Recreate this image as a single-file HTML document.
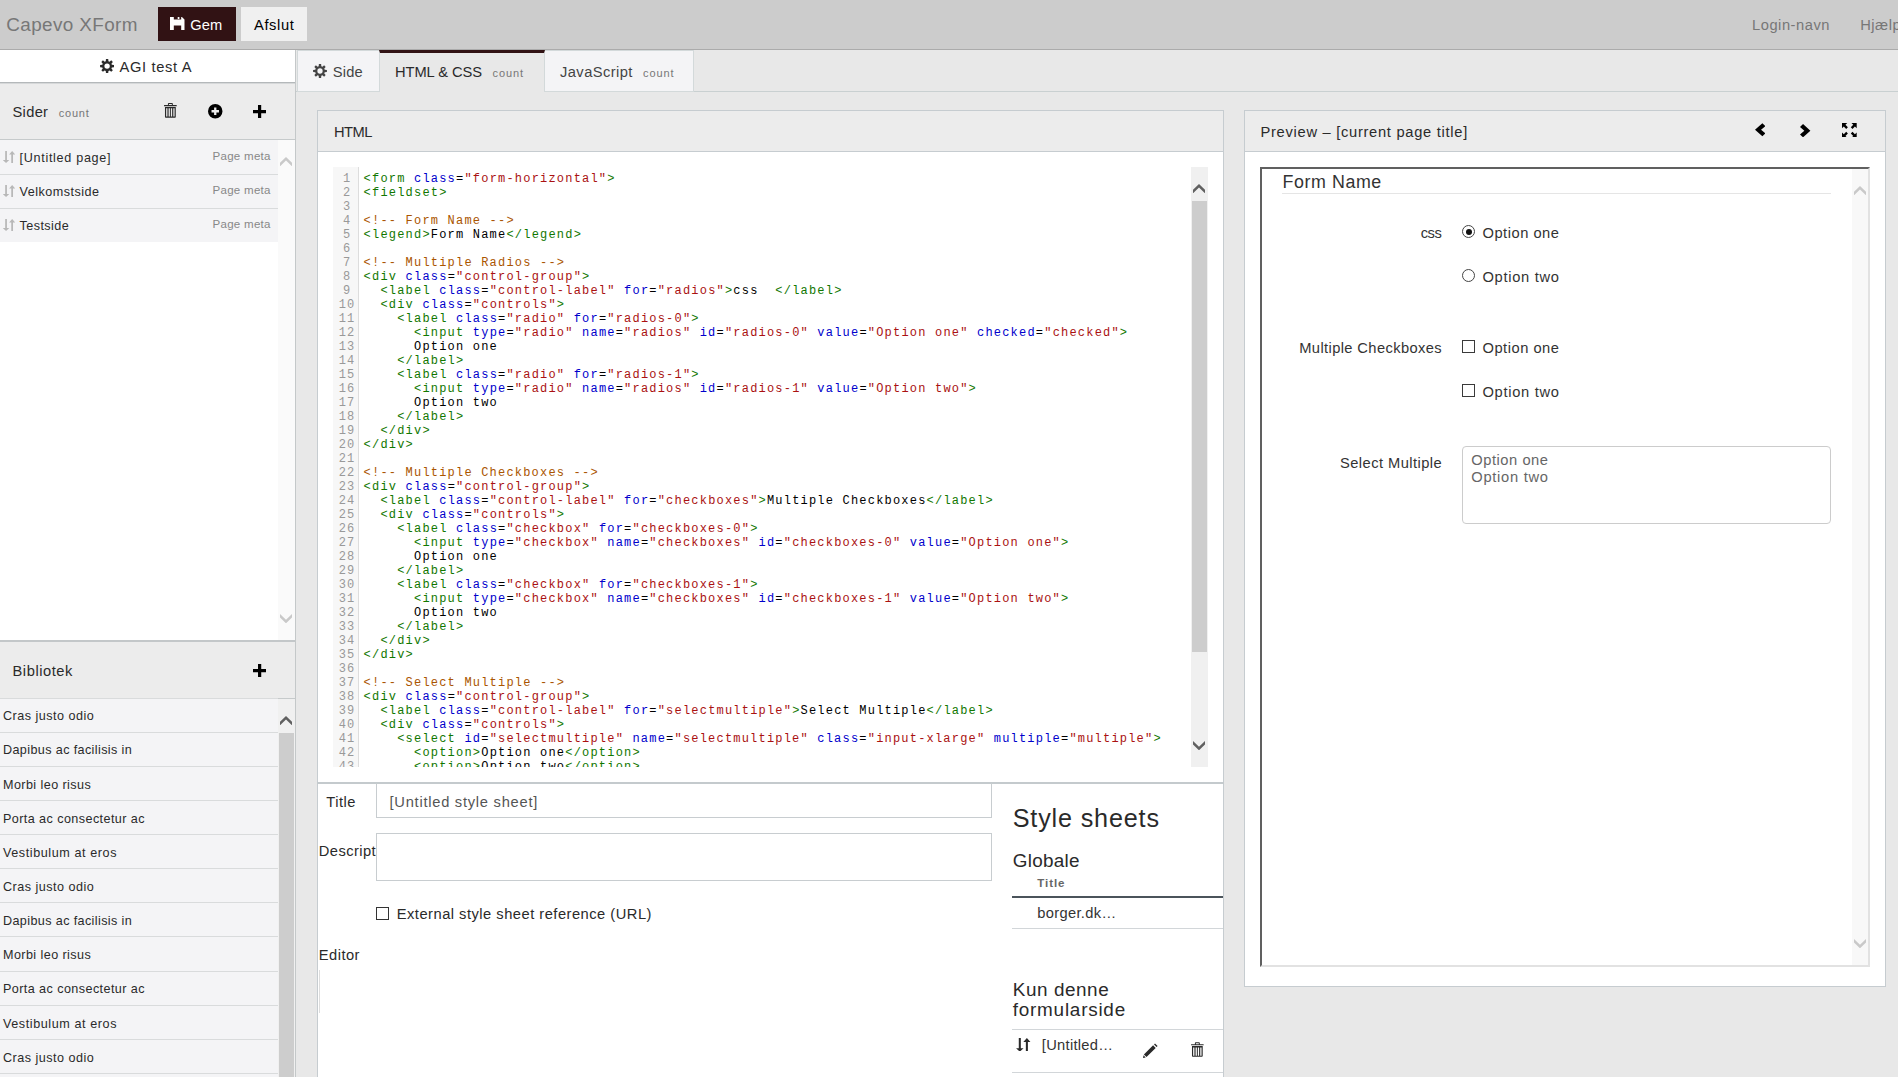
<!DOCTYPE html><html><head><meta charset="utf-8"><title>Capevo XForm</title><style>
html,body{margin:0;padding:0;overflow:hidden;background:#e8e8e8}
body{width:1898px;height:1077px}
#root{position:relative;width:1898px;height:1077px;overflow:hidden;background:#e8e8e8;font-family:"Liberation Sans",sans-serif}
.b{position:absolute;box-sizing:border-box;display:block}
.t{position:absolute;white-space:nowrap;display:block}
#code{position:absolute;left:333px;top:167px;width:858px;height:599.5px;overflow:hidden;background:#fff}
#gut{position:absolute;left:0;top:0;width:26px;height:700px;background:#f7f7f7;border-right:1px solid #ddd;box-sizing:border-box}
#code .ln,#code .cl{position:absolute;font-family:"Liberation Mono",monospace;font-size:12px;line-height:14px;height:14px;white-space:pre;letter-spacing:1.2px}
#code .ln{left:5.6px;width:17px;text-align:center;color:#999}
#code .cl{left:30.6px;color:#000}
.tg{color:#117700}.at{color:#0000cc}.st{color:#aa1111}.cm{color:#aa5500}
</style></head><body><div id="root">
<div class="b" style="left:0px;top:0px;width:1898px;height:50px;background:#cccccc;border-bottom:1px solid #ababab"></div>
<span class="t" style="left:6.25px;top:14.25px;font-size:18.9px;line-height:21px;letter-spacing:0.38px;color:#777;">Capevo XForm</span>
<div class="b" style="left:158px;top:7px;width:78px;height:34px;background:#311214"></div>
<svg class="b" style="left:170px;top:16.7px" width="14.5" height="13.6" viewBox="0 0 14.5 13.6" fill="#fff" stroke="none"><path d="M0 0 H12 L14.5 2.4 V13.6 H0 Z M3.8 0 V2.4 H11.2 V0 H9.4 V0.0 H9.4 V2.0 H7.7 V0 Z M3.8 8.6 V13.6 H11.2 V8.6 Z" fill-rule="evenodd"/></svg>
<span class="t" style="left:190.20px;top:17.00px;font-size:14.7px;line-height:16px;letter-spacing:0.17px;color:#fff;">Gem</span>
<div class="b" style="left:241px;top:7px;width:66px;height:34px;background:#f0f0f0"></div>
<span class="t" style="left:254.00px;top:17.00px;font-size:14.7px;line-height:16px;letter-spacing:0.6px;color:#000;">Afslut</span>
<span class="t" style="left:1752.00px;top:17.00px;font-size:14.7px;line-height:16px;letter-spacing:0.53px;color:#777;">Login-navn</span>
<span class="t" style="left:1860.25px;top:17.00px;font-size:14.7px;line-height:16px;letter-spacing:0.5px;color:#777;">Hjælp</span>
<div class="b" style="left:0px;top:50px;width:296px;height:1027px;background:#fff;border-right:1px solid #c4c8c9"></div>
<div class="b" style="left:0px;top:82px;width:295px;height:1px;background:#b4b8ba"></div>
<div class="b" style="left:0px;top:83px;width:295px;height:1px;background:#d6d8d9"></div>
<svg class="b" style="left:100.1px;top:58.9px" width="14.2" height="14.2" viewBox="0 0 14 14" fill="#2a2a2a" stroke="none"><path d="M5.88 0.09 L8.12 0.09 L8.31 2.28 L9.42 2.74 L11.10 1.32 L12.68 2.90 L11.26 4.58 L11.72 5.69 L13.91 5.88 L13.91 8.12 L11.72 8.31 L11.26 9.42 L12.68 11.10 L11.10 12.68 L9.42 11.26 L8.31 11.72 L8.12 13.91 L5.88 13.91 L5.69 11.72 L4.58 11.26 L2.90 12.68 L1.32 11.10 L2.74 9.42 L2.28 8.31 L0.09 8.12 L0.09 5.88 L2.28 5.69 L2.74 4.58 L1.32 2.90 L2.90 1.32 L4.58 2.74 L5.69 2.28 Z M7 4.35 A2.65 2.65 0 1 0 7 9.65 A2.65 2.65 0 1 0 7 4.35 Z" fill-rule="evenodd"/></svg>
<span class="t" style="left:119.50px;top:59.00px;font-size:14.7px;line-height:16px;letter-spacing:0.65px;color:#2a2a2a;">AGI test A</span>
<div class="b" style="left:0px;top:84px;width:295px;height:56px;background:#ececec;border-bottom:1px solid #c6cacb"></div>
<span class="t" style="left:12.50px;top:104.00px;font-size:14.7px;line-height:16px;letter-spacing:0.3px;color:#2a2a2a;">Sider</span>
<span class="t" style="left:58.75px;top:107.00px;font-size:11.03px;line-height:12px;letter-spacing:0.75px;color:#777;">count</span>
<svg class="b" style="left:164.25px;top:103.25px" width="12.75" height="14.75" viewBox="0 0 13 15" fill="#2a2a2a" stroke="none"><path d="M4 2 V0.8 Q4 0 4.8 0 H8.2 Q9 0 9 0.8 V2 H12.6 Q13 2 13 2.4 V3.2 H0 V2.4 Q0 2 0.4 2 Z M5 2 H8 V1 H5 Z M1 4 H12 V14.2 Q12 15 11.2 15 H1.8 Q1 15 1 14.2 Z M2.2 5.4 V13.8 H3.5 V5.4 Z M4.7 5.4 V13.8 H6 V5.4 Z M7 5.4 V13.8 H8.3 V5.4 Z M9.5 5.4 V13.8 H10.8 V5.4 Z" fill-rule="evenodd"/></svg>
<svg class="b" style="left:208px;top:104.25px" width="14.5" height="14.5" viewBox="0 0 14 14" fill="#000" stroke="none"><path d="M7 0 A7 7 0 1 0 7 14 A7 7 0 1 0 7 0 Z M5.9 3.4 H8.1 V5.9 H10.6 V8.1 H8.1 V10.6 H5.9 V8.1 H3.4 V5.9 H5.9 Z" fill-rule="evenodd"/></svg>
<svg class="b" style="left:252.7px;top:105.1px" width="13.2" height="13.2" viewBox="0 0 14 14" fill="#000" stroke="none"><path d="M5.3 0 H8.7 V5.3 H14 V8.7 H8.7 V14 H5.3 V8.7 H0 V5.3 H5.3 Z"/></svg>
<div class="b" style="left:0px;top:140px;width:278px;height:35px;background:#f4f4f6;border-bottom:1px solid #d9dbdc"></div>
<svg class="b" style="left:2.7px;top:151px" width="12.2" height="12" viewBox="0 0 12.4 12" fill="#b8b8b8" stroke="none"><path d="M2.2 0 H4 V9 H6.4 L3.1 12 L-0.2 9 H2.2 Z"/><path d="M8.4 12 H10.2 V3.4 H12.4 L9.3 0 L6.2 3.4 H8.4 Z"/></svg>
<span class="t" style="left:19.50px;top:150.75px;font-size:12.6px;line-height:14px;letter-spacing:0.7px;color:#2a2a2a;">[Untitled page]</span>
<span class="t" style="left:212.50px;top:150.00px;font-size:11.55px;line-height:12px;letter-spacing:0.27px;color:#888;">Page meta</span>
<div class="b" style="left:0px;top:175px;width:278px;height:34px;background:#f4f4f6;border-bottom:1px solid #d9dbdc"></div>
<svg class="b" style="left:2.7px;top:185px" width="12.2" height="12" viewBox="0 0 12.4 12" fill="#b8b8b8" stroke="none"><path d="M2.2 0 H4 V9 H6.4 L3.1 12 L-0.2 9 H2.2 Z"/><path d="M8.4 12 H10.2 V3.4 H12.4 L9.3 0 L6.2 3.4 H8.4 Z"/></svg>
<span class="t" style="left:19.50px;top:184.75px;font-size:12.6px;line-height:14px;letter-spacing:0.48px;color:#2a2a2a;">Velkomstside</span>
<span class="t" style="left:212.50px;top:184.00px;font-size:11.55px;line-height:12px;letter-spacing:0.27px;color:#888;">Page meta</span>
<div class="b" style="left:0px;top:209px;width:278px;height:33px;background:#f4f4f6"></div>
<svg class="b" style="left:2.7px;top:219px" width="12.2" height="12" viewBox="0 0 12.4 12" fill="#b8b8b8" stroke="none"><path d="M2.2 0 H4 V9 H6.4 L3.1 12 L-0.2 9 H2.2 Z"/><path d="M8.4 12 H10.2 V3.4 H12.4 L9.3 0 L6.2 3.4 H8.4 Z"/></svg>
<span class="t" style="left:19.50px;top:218.75px;font-size:12.6px;line-height:14px;letter-spacing:0.43px;color:#2a2a2a;">Testside</span>
<span class="t" style="left:212.50px;top:218.00px;font-size:11.55px;line-height:12px;letter-spacing:0.27px;color:#888;">Page meta</span>
<div class="b" style="left:278px;top:140px;width:17px;height:500px;background:#fafafa"></div>
<svg class="b" style="left:280.2px;top:156.7px" width="12" height="9.3" viewBox="0 0 12 9.3" fill="#c9c9c9"><path d="M0 5.8 L6 0 L12 5.8 V9.3 L6 3.6 L0 9.3 Z"/></svg>
<svg class="b" style="left:280.2px;top:614px" width="12" height="9.3" viewBox="0 0 12 9.3" fill="#c9c9c9"><path d="M0 3.5 L6 9.3 L12 3.5 V0 L6 5.7 L0 0 Z"/></svg>
<div class="b" style="left:0px;top:640px;width:295px;height:2px;background:#c3c7c9"></div>
<div class="b" style="left:0px;top:642px;width:295px;height:56px;background:#ececec"></div>
<div class="b" style="left:0px;top:698px;width:295px;height:1px;background:#c6cacb"></div>
<span class="t" style="left:12.50px;top:663.25px;font-size:14.7px;line-height:16px;letter-spacing:0.55px;color:#2a2a2a;">Bibliotek</span>
<svg class="b" style="left:253px;top:663.5px" width="13.25" height="13.25" viewBox="0 0 14 14" fill="#000" stroke="none"><path d="M5.3 0 H8.7 V5.3 H14 V8.7 H8.7 V14 H5.3 V8.7 H0 V5.3 H5.3 Z"/></svg>
<div class="b" style="left:0px;top:698px;width:278px;height:34px;background:#f4f4f6;border-top:1px solid #d9dbdc"></div>
<span class="t" style="left:3.00px;top:709.00px;font-size:12.6px;line-height:14px;letter-spacing:0.48px;color:#2a2a2a;">Cras justo odio</span>
<div class="b" style="left:0px;top:732px;width:278px;height:34px;background:#f4f4f6;border-top:1px solid #d9dbdc"></div>
<span class="t" style="left:3.00px;top:743.00px;font-size:12.6px;line-height:14px;letter-spacing:0.38px;color:#2a2a2a;">Dapibus ac facilisis in</span>
<div class="b" style="left:0px;top:766px;width:278px;height:34px;background:#f4f4f6;border-top:1px solid #d9dbdc"></div>
<span class="t" style="left:3.00px;top:778.00px;font-size:12.6px;line-height:14px;letter-spacing:0.42px;color:#2a2a2a;">Morbi leo risus</span>
<div class="b" style="left:0px;top:800px;width:278px;height:34px;background:#f4f4f6;border-top:1px solid #d9dbdc"></div>
<span class="t" style="left:3.00px;top:812.00px;font-size:12.6px;line-height:14px;letter-spacing:0.42px;color:#2a2a2a;">Porta ac consectetur ac</span>
<div class="b" style="left:0px;top:834px;width:278px;height:34px;background:#f4f4f6;border-top:1px solid #d9dbdc"></div>
<span class="t" style="left:3.00px;top:846.00px;font-size:12.6px;line-height:14px;letter-spacing:0.58px;color:#2a2a2a;">Vestibulum at eros</span>
<div class="b" style="left:0px;top:868px;width:278px;height:34px;background:#f4f4f6;border-top:1px solid #d9dbdc"></div>
<span class="t" style="left:3.00px;top:880.00px;font-size:12.6px;line-height:14px;letter-spacing:0.48px;color:#2a2a2a;">Cras justo odio</span>
<div class="b" style="left:0px;top:902px;width:278px;height:34px;background:#f4f4f6;border-top:1px solid #d9dbdc"></div>
<span class="t" style="left:3.00px;top:914.00px;font-size:12.6px;line-height:14px;letter-spacing:0.38px;color:#2a2a2a;">Dapibus ac facilisis in</span>
<div class="b" style="left:0px;top:936px;width:278px;height:35px;background:#f4f4f6;border-top:1px solid #d9dbdc"></div>
<span class="t" style="left:3.00px;top:948.00px;font-size:12.6px;line-height:14px;letter-spacing:0.42px;color:#2a2a2a;">Morbi leo risus</span>
<div class="b" style="left:0px;top:971px;width:278px;height:34px;background:#f4f4f6;border-top:1px solid #d9dbdc"></div>
<span class="t" style="left:3.00px;top:982.00px;font-size:12.6px;line-height:14px;letter-spacing:0.42px;color:#2a2a2a;">Porta ac consectetur ac</span>
<div class="b" style="left:0px;top:1005px;width:278px;height:34px;background:#f4f4f6;border-top:1px solid #d9dbdc"></div>
<span class="t" style="left:3.00px;top:1017.00px;font-size:12.6px;line-height:14px;letter-spacing:0.58px;color:#2a2a2a;">Vestibulum at eros</span>
<div class="b" style="left:0px;top:1039px;width:278px;height:34px;background:#f4f4f6;border-top:1px solid #d9dbdc"></div>
<span class="t" style="left:3.00px;top:1051.00px;font-size:12.6px;line-height:14px;letter-spacing:0.48px;color:#2a2a2a;">Cras justo odio</span>
<div class="b" style="left:0px;top:1073px;width:278px;height:34px;background:#f4f4f6;border-top:1px solid #d9dbdc"></div>
<span class="t" style="left:3.00px;top:1085.00px;font-size:12.6px;line-height:14px;letter-spacing:0.38px;color:#2a2a2a;">Dapibus ac facilisis in</span>
<div class="b" style="left:278px;top:699px;width:17px;height:400px;background:#f0f0f0"></div>
<svg class="b" style="left:280.2px;top:716px" width="12" height="9.3" viewBox="0 0 12 9.3" fill="#606060"><path d="M0 5.8 L6 0 L12 5.8 V9.3 L6 3.6 L0 9.3 Z"/></svg>
<div class="b" style="left:279px;top:733px;width:15px;height:400px;background:#cdcdcd"></div>
<div class="b" style="left:296px;top:91px;width:1602px;height:1px;background:#c9d0d1"></div>
<div class="b" style="left:297px;top:50px;width:83px;height:42px;background:#f4f4f6;border:1px solid #d3d9da"></div>
<svg class="b" style="left:313px;top:64px" width="14" height="14" viewBox="0 0 14 14" fill="#444" stroke="none"><path d="M5.88 0.09 L8.12 0.09 L8.31 2.28 L9.42 2.74 L11.10 1.32 L12.68 2.90 L11.26 4.58 L11.72 5.69 L13.91 5.88 L13.91 8.12 L11.72 8.31 L11.26 9.42 L12.68 11.10 L11.10 12.68 L9.42 11.26 L8.31 11.72 L8.12 13.91 L5.88 13.91 L5.69 11.72 L4.58 11.26 L2.90 12.68 L1.32 11.10 L2.74 9.42 L2.28 8.31 L0.09 8.12 L0.09 5.88 L2.28 5.69 L2.74 4.58 L1.32 2.90 L2.90 1.32 L4.58 2.74 L5.69 2.28 Z M7 4.35 A2.65 2.65 0 1 0 7 9.65 A2.65 2.65 0 1 0 7 4.35 Z" fill-rule="evenodd"/></svg>
<span class="t" style="left:332.75px;top:64.00px;font-size:14.7px;line-height:16px;letter-spacing:0.19px;color:#444;">Side</span>
<div class="b" style="left:379px;top:50px;width:166px;height:42px;background:#e8e8e8;border-top:3px solid #311214;border-left:1px solid #d3d9da;border-right:1px solid #d3d9da"></div>
<span class="t" style="left:395.00px;top:64.00px;font-size:14.7px;line-height:16px;letter-spacing:-0.07px;color:#2a2a2a;">HTML &amp; CSS</span>
<span class="t" style="left:492.50px;top:67.00px;font-size:11.03px;line-height:12px;letter-spacing:0.88px;color:#777;">count</span>
<div class="b" style="left:545px;top:50px;width:149px;height:42px;background:#f4f4f6;border:1px solid #d3d9da;border-left:none"></div>
<span class="t" style="left:560.00px;top:64.00px;font-size:14.7px;line-height:16px;letter-spacing:0.43px;color:#444;">JavaScript</span>
<span class="t" style="left:643.00px;top:67.00px;font-size:11.03px;line-height:12px;letter-spacing:0.88px;color:#777;">count</span>
<div class="b" style="left:317px;top:110px;width:907px;height:673px;background:#fff;border:1px solid #c6ccd0"></div>
<div class="b" style="left:318px;top:111px;width:905px;height:41px;background:#ececec;border-bottom:1px solid #c6ccd0"></div>
<span class="t" style="left:334.00px;top:124.00px;font-size:14.7px;line-height:16px;letter-spacing:-0.51px;color:#2a2a2a;">HTML</span>
<div id="code"><div id="gut"></div>
<div class="ln" style="top:5px">1</div>
<div class="cl" style="top:5px"><span class="tg">&lt;form</span> <span class="at">class</span>=<span class="st">&quot;form-horizontal&quot;</span><span class="tg">&gt;</span></div>
<div class="ln" style="top:19px">2</div>
<div class="cl" style="top:19px"><span class="tg">&lt;fieldset&gt;</span></div>
<div class="ln" style="top:33px">3</div>
<div class="ln" style="top:47px">4</div>
<div class="cl" style="top:47px"><span class="cm">&lt;!-- Form Name --&gt;</span></div>
<div class="ln" style="top:61px">5</div>
<div class="cl" style="top:61px"><span class="tg">&lt;legend&gt;</span>Form Name<span class="tg">&lt;/legend&gt;</span></div>
<div class="ln" style="top:75px">6</div>
<div class="ln" style="top:89px">7</div>
<div class="cl" style="top:89px"><span class="cm">&lt;!-- Multiple Radios --&gt;</span></div>
<div class="ln" style="top:103px">8</div>
<div class="cl" style="top:103px"><span class="tg">&lt;div</span> <span class="at">class</span>=<span class="st">&quot;control-group&quot;</span><span class="tg">&gt;</span></div>
<div class="ln" style="top:117px">9</div>
<div class="cl" style="top:117px">  <span class="tg">&lt;label</span> <span class="at">class</span>=<span class="st">&quot;control-label&quot;</span> <span class="at">for</span>=<span class="st">&quot;radios&quot;</span><span class="tg">&gt;</span>css  <span class="tg">&lt;/label&gt;</span></div>
<div class="ln" style="top:131px">10</div>
<div class="cl" style="top:131px">  <span class="tg">&lt;div</span> <span class="at">class</span>=<span class="st">&quot;controls&quot;</span><span class="tg">&gt;</span></div>
<div class="ln" style="top:145px">11</div>
<div class="cl" style="top:145px">    <span class="tg">&lt;label</span> <span class="at">class</span>=<span class="st">&quot;radio&quot;</span> <span class="at">for</span>=<span class="st">&quot;radios-0&quot;</span><span class="tg">&gt;</span></div>
<div class="ln" style="top:159px">12</div>
<div class="cl" style="top:159px">      <span class="tg">&lt;input</span> <span class="at">type</span>=<span class="st">&quot;radio&quot;</span> <span class="at">name</span>=<span class="st">&quot;radios&quot;</span> <span class="at">id</span>=<span class="st">&quot;radios-0&quot;</span> <span class="at">value</span>=<span class="st">&quot;Option one&quot;</span> <span class="at">checked</span>=<span class="st">&quot;checked&quot;</span><span class="tg">&gt;</span></div>
<div class="ln" style="top:173px">13</div>
<div class="cl" style="top:173px">      Option one</div>
<div class="ln" style="top:187px">14</div>
<div class="cl" style="top:187px">    <span class="tg">&lt;/label&gt;</span></div>
<div class="ln" style="top:201px">15</div>
<div class="cl" style="top:201px">    <span class="tg">&lt;label</span> <span class="at">class</span>=<span class="st">&quot;radio&quot;</span> <span class="at">for</span>=<span class="st">&quot;radios-1&quot;</span><span class="tg">&gt;</span></div>
<div class="ln" style="top:215px">16</div>
<div class="cl" style="top:215px">      <span class="tg">&lt;input</span> <span class="at">type</span>=<span class="st">&quot;radio&quot;</span> <span class="at">name</span>=<span class="st">&quot;radios&quot;</span> <span class="at">id</span>=<span class="st">&quot;radios-1&quot;</span> <span class="at">value</span>=<span class="st">&quot;Option two&quot;</span><span class="tg">&gt;</span></div>
<div class="ln" style="top:229px">17</div>
<div class="cl" style="top:229px">      Option two</div>
<div class="ln" style="top:243px">18</div>
<div class="cl" style="top:243px">    <span class="tg">&lt;/label&gt;</span></div>
<div class="ln" style="top:257px">19</div>
<div class="cl" style="top:257px">  <span class="tg">&lt;/div&gt;</span></div>
<div class="ln" style="top:271px">20</div>
<div class="cl" style="top:271px"><span class="tg">&lt;/div&gt;</span></div>
<div class="ln" style="top:285px">21</div>
<div class="ln" style="top:299px">22</div>
<div class="cl" style="top:299px"><span class="cm">&lt;!-- Multiple Checkboxes --&gt;</span></div>
<div class="ln" style="top:313px">23</div>
<div class="cl" style="top:313px"><span class="tg">&lt;div</span> <span class="at">class</span>=<span class="st">&quot;control-group&quot;</span><span class="tg">&gt;</span></div>
<div class="ln" style="top:327px">24</div>
<div class="cl" style="top:327px">  <span class="tg">&lt;label</span> <span class="at">class</span>=<span class="st">&quot;control-label&quot;</span> <span class="at">for</span>=<span class="st">&quot;checkboxes&quot;</span><span class="tg">&gt;</span>Multiple Checkboxes<span class="tg">&lt;/label&gt;</span></div>
<div class="ln" style="top:341px">25</div>
<div class="cl" style="top:341px">  <span class="tg">&lt;div</span> <span class="at">class</span>=<span class="st">&quot;controls&quot;</span><span class="tg">&gt;</span></div>
<div class="ln" style="top:355px">26</div>
<div class="cl" style="top:355px">    <span class="tg">&lt;label</span> <span class="at">class</span>=<span class="st">&quot;checkbox&quot;</span> <span class="at">for</span>=<span class="st">&quot;checkboxes-0&quot;</span><span class="tg">&gt;</span></div>
<div class="ln" style="top:369px">27</div>
<div class="cl" style="top:369px">      <span class="tg">&lt;input</span> <span class="at">type</span>=<span class="st">&quot;checkbox&quot;</span> <span class="at">name</span>=<span class="st">&quot;checkboxes&quot;</span> <span class="at">id</span>=<span class="st">&quot;checkboxes-0&quot;</span> <span class="at">value</span>=<span class="st">&quot;Option one&quot;</span><span class="tg">&gt;</span></div>
<div class="ln" style="top:383px">28</div>
<div class="cl" style="top:383px">      Option one</div>
<div class="ln" style="top:397px">29</div>
<div class="cl" style="top:397px">    <span class="tg">&lt;/label&gt;</span></div>
<div class="ln" style="top:411px">30</div>
<div class="cl" style="top:411px">    <span class="tg">&lt;label</span> <span class="at">class</span>=<span class="st">&quot;checkbox&quot;</span> <span class="at">for</span>=<span class="st">&quot;checkboxes-1&quot;</span><span class="tg">&gt;</span></div>
<div class="ln" style="top:425px">31</div>
<div class="cl" style="top:425px">      <span class="tg">&lt;input</span> <span class="at">type</span>=<span class="st">&quot;checkbox&quot;</span> <span class="at">name</span>=<span class="st">&quot;checkboxes&quot;</span> <span class="at">id</span>=<span class="st">&quot;checkboxes-1&quot;</span> <span class="at">value</span>=<span class="st">&quot;Option two&quot;</span><span class="tg">&gt;</span></div>
<div class="ln" style="top:439px">32</div>
<div class="cl" style="top:439px">      Option two</div>
<div class="ln" style="top:453px">33</div>
<div class="cl" style="top:453px">    <span class="tg">&lt;/label&gt;</span></div>
<div class="ln" style="top:467px">34</div>
<div class="cl" style="top:467px">  <span class="tg">&lt;/div&gt;</span></div>
<div class="ln" style="top:481px">35</div>
<div class="cl" style="top:481px"><span class="tg">&lt;/div&gt;</span></div>
<div class="ln" style="top:495px">36</div>
<div class="ln" style="top:509px">37</div>
<div class="cl" style="top:509px"><span class="cm">&lt;!-- Select Multiple --&gt;</span></div>
<div class="ln" style="top:523px">38</div>
<div class="cl" style="top:523px"><span class="tg">&lt;div</span> <span class="at">class</span>=<span class="st">&quot;control-group&quot;</span><span class="tg">&gt;</span></div>
<div class="ln" style="top:537px">39</div>
<div class="cl" style="top:537px">  <span class="tg">&lt;label</span> <span class="at">class</span>=<span class="st">&quot;control-label&quot;</span> <span class="at">for</span>=<span class="st">&quot;selectmultiple&quot;</span><span class="tg">&gt;</span>Select Multiple<span class="tg">&lt;/label&gt;</span></div>
<div class="ln" style="top:551px">40</div>
<div class="cl" style="top:551px">  <span class="tg">&lt;div</span> <span class="at">class</span>=<span class="st">&quot;controls&quot;</span><span class="tg">&gt;</span></div>
<div class="ln" style="top:565px">41</div>
<div class="cl" style="top:565px">    <span class="tg">&lt;select</span> <span class="at">id</span>=<span class="st">&quot;selectmultiple&quot;</span> <span class="at">name</span>=<span class="st">&quot;selectmultiple&quot;</span> <span class="at">class</span>=<span class="st">&quot;input-xlarge&quot;</span> <span class="at">multiple</span>=<span class="st">&quot;multiple&quot;</span><span class="tg">&gt;</span></div>
<div class="ln" style="top:579px">42</div>
<div class="cl" style="top:579px">      <span class="tg">&lt;option&gt;</span>Option one<span class="tg">&lt;/option&gt;</span></div>
<div class="ln" style="top:593px">43</div>
<div class="cl" style="top:593px">      <span class="tg">&lt;option&gt;</span>Option two<span class="tg">&lt;/option&gt;</span></div>
<div class="ln" style="top:607px">44</div>
<div class="cl" style="top:607px">    <span class="tg">&lt;/select&gt;</span></div>
</div>
<div class="b" style="left:1191.25px;top:167px;width:16.75px;height:599.5px;background:#f0f0f0"></div>
<svg class="b" style="left:1193.2px;top:183.7px" width="12" height="9.3" viewBox="0 0 12 9.3" fill="#606060"><path d="M0 5.8 L6 0 L12 5.8 V9.3 L6 3.6 L0 9.3 Z"/></svg>
<div class="b" style="left:1192px;top:201px;width:15px;height:450.5px;background:#cdcdcd"></div>
<svg class="b" style="left:1193.2px;top:740.5px" width="12" height="9.3" viewBox="0 0 12 9.3" fill="#606060"><path d="M0 3.5 L6 9.3 L12 3.5 V0 L6 5.7 L0 0 Z"/></svg>
<div class="b" style="left:317px;top:782px;width:907px;height:2px;background:#c4cacd"></div>
<div class="b" style="left:317px;top:784px;width:907px;height:300px;background:#fff;border-left:1px solid #c6ccd0;border-right:1px solid #c6ccd0"></div>
<span class="t" style="left:326.25px;top:794.00px;font-size:14.7px;line-height:16px;letter-spacing:0.51px;color:#2a2a2a;">Title</span>
<div class="b" style="left:376px;top:783px;width:616px;height:35px;background:#fff;border:1px solid #c8cdd0;border-top-color:#c4cacd"></div>
<span class="t" style="left:389.50px;top:794.00px;font-size:14.7px;line-height:16px;letter-spacing:0.74px;color:#555;">[Untitled style sheet]</span>
<span class="t" style="left:318.75px;top:843.25px;font-size:14.7px;line-height:16px;letter-spacing:0.44px;color:#2a2a2a;">Descript</span>
<div class="b" style="left:376px;top:833px;width:616px;height:48px;background:#fff;border:1px solid #c8cdd0"></div>
<div class="b" style="left:376.25px;top:907.25px;width:13px;height:13px;background:#fff;border:1px solid #333"></div>
<span class="t" style="left:396.75px;top:906.25px;font-size:14.7px;line-height:16px;letter-spacing:0.49px;color:#2a2a2a;">External style sheet reference (URL)</span>
<span class="t" style="left:318.75px;top:947.00px;font-size:14.7px;line-height:16px;letter-spacing:0.47px;color:#2a2a2a;">Editor</span>
<div class="b" style="left:319px;top:969.5px;width:1px;height:43.5px;background:#ddd"></div>
<span class="t" style="left:1012.75px;top:804.00px;font-size:25.2px;line-height:28px;letter-spacing:0.82px;color:#2a2a2a;">Style sheets</span>
<span class="t" style="left:1012.75px;top:850.00px;font-size:18.9px;line-height:21px;letter-spacing:0.27px;color:#2a2a2a;">Globale</span>
<span class="t" style="left:1037.25px;top:877.00px;font-size:11.55px;line-height:12px;letter-spacing:0.93px;color:#666;font-weight:bold;">Title</span>
<div class="b" style="left:1012px;top:896px;width:211px;height:2px;background:#4b545b"></div>
<span class="t" style="left:1037.25px;top:905.25px;font-size:14.7px;line-height:16px;letter-spacing:0.33px;color:#333;">borger.dk…</span>
<div class="b" style="left:1012px;top:928px;width:211px;height:1px;background:#d2d6d9"></div>
<span class="t" style="left:1012.75px;top:978.75px;font-size:18.9px;line-height:21px;letter-spacing:0.57px;color:#2a2a2a;">Kun denne</span>
<span class="t" style="left:1012.75px;top:998.75px;font-size:18.9px;line-height:21px;letter-spacing:0.77px;color:#2a2a2a;">formularside</span>
<div class="b" style="left:1012px;top:1029px;width:211px;height:1px;background:#d2d6d9"></div>
<svg class="b" style="left:1016.4px;top:1037.5px" width="14.7" height="13.7" viewBox="0 0 12.4 12" fill="#2a2a2a" stroke="none"><path d="M2.2 0 H4 V9 H6.4 L3.1 12 L-0.2 9 H2.2 Z"/><path d="M8.4 12 H10.2 V3.4 H12.4 L9.3 0 L6.2 3.4 H8.4 Z"/></svg>
<span class="t" style="left:1041.80px;top:1036.90px;font-size:14.7px;line-height:16px;letter-spacing:0.29px;color:#333;">[Untitled…</span>
<svg class="b" style="left:1143.2px;top:1042.5px" width="15" height="15" viewBox="0 0 15 15" fill="#2a2a2a" stroke="none"><path d="M10.1 2.3 L12.7 4.9 L3.5 14.1 L0.9 11.5 Z M0.5 12.3 L2.7 14.5 L0 15 Z M11.0 1.4 L12.0 0.4 L14.6 3.0 L13.6 4.0 Z"/></svg>
<svg class="b" style="left:1191px;top:1042px" width="12.7" height="15" viewBox="0 0 13 15" fill="#2a2a2a" stroke="none"><path d="M4 2 V0.8 Q4 0 4.8 0 H8.2 Q9 0 9 0.8 V2 H12.6 Q13 2 13 2.4 V3.2 H0 V2.4 Q0 2 0.4 2 Z M5 2 H8 V1 H5 Z M1 4 H12 V14.2 Q12 15 11.2 15 H1.8 Q1 15 1 14.2 Z M2.2 5.4 V13.8 H3.5 V5.4 Z M4.7 5.4 V13.8 H6 V5.4 Z M7 5.4 V13.8 H8.3 V5.4 Z M9.5 5.4 V13.8 H10.8 V5.4 Z" fill-rule="evenodd"/></svg>
<div class="b" style="left:1012px;top:1072px;width:211px;height:1px;background:#d2d6d9"></div>
<div class="b" style="left:1244px;top:110px;width:642px;height:877px;background:#fff;border:1px solid #c6ccd0"></div>
<div class="b" style="left:1245px;top:111px;width:640px;height:41px;background:#ececec;border-bottom:1px solid #c6ccd0"></div>
<span class="t" style="left:1260.50px;top:124.00px;font-size:14.7px;line-height:16px;letter-spacing:0.71px;color:#2a2a2a;">Preview – [current page title]</span>
<svg class="b" style="left:1754.7px;top:123.2px" width="10.4" height="13.5" viewBox="0 0 11 14" fill="#000" stroke="none"><path d="M7.8 0 L11 3.1 L6.4 7 L11 10.9 L7.8 14 L0 7 Z"/></svg>
<svg class="b" style="left:1800.4px;top:123.6px" width="10.4" height="13.4" viewBox="0 0 11 14" fill="#000" stroke="none"><path d="M3.2 0 L0 3.1 L4.6 7 L0 10.9 L3.2 14 L11 7 Z"/></svg>
<svg class="b" style="left:1842.3px;top:122.6px" width="14.7" height="14.7" viewBox="0 0 14 14" fill="#000" stroke="none"><path d="M0 0 H5 L3.3 1.7 L5.6 4 L4 5.6 L1.7 3.3 L0 5 Z"/><path d="M14 0 V5 L12.3 3.3 L10 5.6 L8.4 4 L10.7 1.7 L9 0 Z"/><path d="M0 14 V9 L1.7 10.7 L4 8.4 L5.6 10 L3.3 12.3 L5 14 Z"/><path d="M14 14 H9 L10.7 12.3 L8.4 10 L10 8.4 L12.3 10.7 L14 9 Z"/></svg>
<div class="b" style="left:1260px;top:167px;width:610px;height:800px;background:#fff;border:2px solid;border-color:#606060 #e2e2e2 #e2e2e2 #606060"></div>
<div class="b" style="left:1851.5px;top:169px;width:16.75px;height:796px;background:#f8f8f8"></div>
<svg class="b" style="left:1853.7px;top:186px" width="12" height="9.3" viewBox="0 0 12 9.3" fill="#c9c9c9"><path d="M0 5.8 L6 0 L12 5.8 V9.3 L6 3.6 L0 9.3 Z"/></svg>
<svg class="b" style="left:1853.7px;top:939px" width="12" height="9.3" viewBox="0 0 12 9.3" fill="#c9c9c9"><path d="M0 3.5 L6 9.3 L12 3.5 V0 L6 5.7 L0 0 Z"/></svg>
<span class="t" style="left:1282.50px;top:172.00px;font-size:17.85px;line-height:20px;letter-spacing:0.57px;color:#333;">Form Name</span>
<div class="b" style="left:1282px;top:193px;width:549px;height:1px;background:#e5e5e5"></div>
<span class="t" style="left:1420.75px;top:225.00px;font-size:14.7px;line-height:16px;letter-spacing:-0.53px;color:#333;">css</span>
<div class="b" style="left:1462px;top:225px;width:13px;height:13px;border-radius:50%;border:1px solid #444;background:#fff"></div>
<div class="b" style="left:1465.5px;top:228.5px;width:6px;height:6px;border-radius:50%;background:#111"></div>
<span class="t" style="left:1482.50px;top:224.50px;font-size:14.7px;line-height:16px;letter-spacing:0.51px;color:#333;">Option one</span>
<div class="b" style="left:1462px;top:269px;width:13px;height:13px;border-radius:50%;border:1px solid #444;background:#fff"></div>
<span class="t" style="left:1482.50px;top:268.75px;font-size:14.7px;line-height:16px;letter-spacing:0.69px;color:#333;">Option two</span>
<span class="t" style="left:1299.25px;top:340.00px;font-size:14.7px;line-height:16px;letter-spacing:0.38px;color:#333;">Multiple Checkboxes</span>
<div class="b" style="left:1462px;top:340px;width:13px;height:13px;border:1px solid #3a3a3a;background:#fff"></div>
<span class="t" style="left:1482.50px;top:340.00px;font-size:14.7px;line-height:16px;letter-spacing:0.51px;color:#333;">Option one</span>
<div class="b" style="left:1462px;top:384px;width:13px;height:13px;border:1px solid #3a3a3a;background:#fff"></div>
<span class="t" style="left:1482.50px;top:384.00px;font-size:14.7px;line-height:16px;letter-spacing:0.69px;color:#333;">Option two</span>
<span class="t" style="left:1340.00px;top:455.00px;font-size:14.7px;line-height:16px;letter-spacing:0.44px;color:#333;">Select Multiple</span>
<div class="b" style="left:1462px;top:446px;width:369px;height:78px;border:1px solid #ccc;border-radius:4px;background:#fff"></div>
<span class="t" style="left:1471.25px;top:452.00px;font-size:14.7px;line-height:16px;letter-spacing:0.54px;color:#666;">Option one</span>
<span class="t" style="left:1471.25px;top:469.00px;font-size:14.7px;line-height:16px;letter-spacing:0.72px;color:#666;">Option two</span>
</div></body></html>
